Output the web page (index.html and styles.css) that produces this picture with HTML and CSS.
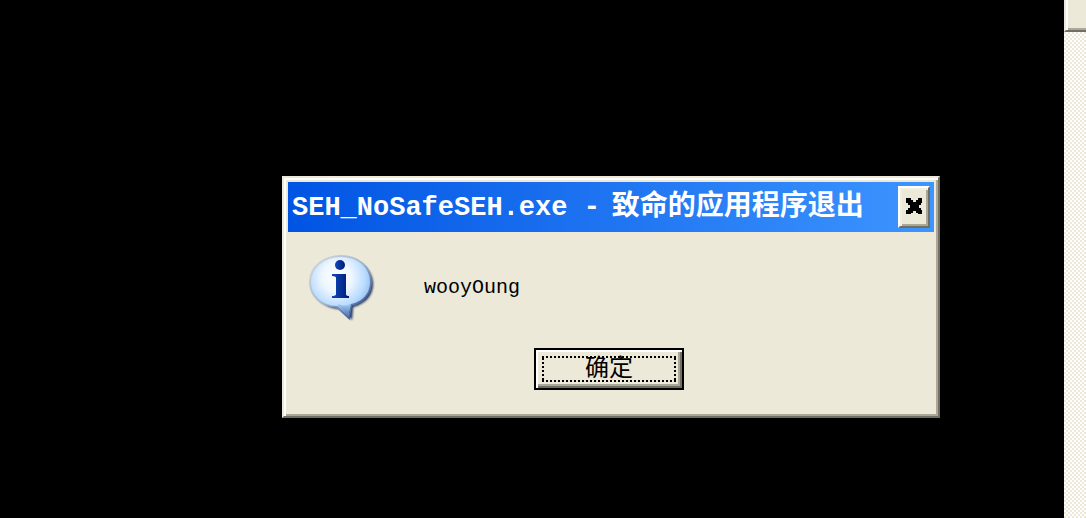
FILE: index.html
```html
<!DOCTYPE html>
<html lang="zh-CN">
<head>
<meta charset="utf-8">
<title>SEH_NoSafeSEH.exe</title>
<link rel="stylesheet" href="styles.css">
</head>
<body>
<main class="desktop">
  <div class="console"></div>
  <aside class="side">
    <div class="side-header"></div>
    <div class="side-track"></div>
  </aside>
  <section class="dialog" role="alertdialog" aria-labelledby="title" aria-describedby="message">
    <header class="titlebar">
      <h1 class="title" id="title"><span class="latin">SEH_NoSafeSEH.exe -</span><span>致命的应用程序退出</span></h1>
      <button class="close" type="button" aria-label="Close">
        <svg class="cross" width="16" height="16" viewBox="0 0 8 8" shape-rendering="crispEdges" aria-hidden="true"><path d="M0 0H2V1H3V2H5V1H6V0H8V2H7V3H6V5H7V6H8V8H6V7H5V6H3V7H2V8H0V6H1V5H2V3H1V2H0Z"/></svg>
      </button>
    </header>
    <div class="content">
      <svg class="info" width="68" height="68" viewBox="0 0 68 68" aria-hidden="true">
        <defs>
          <radialGradient id="bubble" cx="44%" cy="34%" r="62%">
            <stop offset="0" stop-color="#fff"/>
            <stop offset=".4" stop-color="#eef6ff"/>
            <stop offset=".75" stop-color="#b9dcff"/>
            <stop offset="1" stop-color="#8fb8e8"/>
          </radialGradient>
          <linearGradient id="rim" x1="0" y1="0" x2="1" y2="1">
            <stop offset="0" stop-color="#d6d9dc"/>
            <stop offset=".5" stop-color="#a3b6cf"/>
            <stop offset="1" stop-color="#12357a"/>
          </linearGradient>
          <linearGradient id="tail" x1="0" y1="0" x2="0" y2="1">
            <stop offset="0" stop-color="#a4cbf4"/>
            <stop offset="1" stop-color="#4a75b4"/>
          </linearGradient>
          <linearGradient id="letter" x1="0" y1="0" x2="1" y2="0">
            <stop offset="0" stop-color="#0d49b8"/>
            <stop offset="1" stop-color="#001a78"/>
          </linearGradient>
          <filter id="soft" x="-20%" y="-20%" width="140%" height="140%"><feGaussianBlur stdDeviation="1"/></filter>
        </defs>
        <path transform="translate(2 2)" filter="url(#soft)" fill="#12295c" d="M33 3C50 3 63 14 63 28C63 40 55 48 43 51L42 64L30 53C14 52 3 42 3 28C3 14 16 3 33 3Z"/>
        <path fill="url(#bubble)" stroke="url(#rim)" stroke-width="2" d="M33 2C50 2 63 13 63 28C63 40 55 49 43 51L41 64L29 53C13 52 2 42 2 28C2 13 16 2 33 2Z"/>
        <path fill="url(#tail)" d="M30 50Q36 53 43 50L40 62L30 52Z"/>
        <ellipse cx="32" cy="11" rx="5" ry="5" fill="url(#letter)"/>
        <path fill="url(#letter)" d="M24 20H38V40Q38 42 41 42V44H24V42Q28 42 28 40V24Q28 22 24 22Z"/>
      </svg>
      <p class="message" id="message">wooyOung</p>
    </div>
    <footer class="actions">
      <button class="ok" type="button"><span class="focus"><svg class="dots" width="100%" height="100%" shape-rendering="crispEdges" aria-hidden="true"><rect x="0" y="0" width="100%" height="100%"/></svg>确定</span></button>
    </footer>
  </section>
</main>
</body>
</html>
```
FILE: styles.css
```css
* { box-sizing: border-box; }
body {
  margin: 0;
  background: #000;
  color: #000;
  font-family: "Liberation Mono", "Noto Sans CJK SC", monospace;
}
.desktop {
  position: relative;
  display: flex;
  min-height: 100vh;
  overflow: hidden;
}
.console { flex: 1; background: #000; }
.side {
  display: flex;
  flex-direction: column;
  width: 22px;
}
.side-header {
  height: 32px;
  background: #ece9d8;
  border-left: 2px solid #ece9d8;
  border-bottom: 2px solid #716f64;
  box-shadow: inset 2px 0 #fff, inset 0 -2px #aca899;
}
.side-track {
  flex: 1;
  background: repeating-conic-gradient(#fff 0 25%, #ece9d8 0 50%) 0 0 / 4px 4px;
}
.dialog {
  position: absolute;
  left: 282px;
  top: 176px;
  width: 658px;
  padding: 4px;
  background: #ece9d8;
  border: 2px solid;
  border-color: #ece9d8 #716f64 #716f64 #ece9d8;
  box-shadow: inset 2px 2px #fff, inset -2px -2px #aca899;
}
.titlebar {
  display: flex;
  align-items: center;
  justify-content: space-between;
  height: 50px;
  padding: 0 4px;
  background: linear-gradient(90deg, #0054e3, #3d95ff);
}
.title {
  display: flex;
  align-items: baseline;
  gap: 12px;
  margin: 0;
  padding-top: 2px;
  color: #fff;
  font-size: 28px;
  font-weight: 700;
  line-height: 40px;
  white-space: nowrap;
}
.latin { font-size: 27px; }
.close {
  display: grid;
  place-items: center;
  width: 32px;
  height: 42px;
  padding: 0 0 2px;
  background: #ece9d8;
  border: 2px solid;
  border-color: #fff #716f64 #716f64 #fff;
  box-shadow: inset 2px 2px #f1efe2, inset -2px -2px #aca899;
  color: #000;
}
.cross path {
  stroke: #000;
  stroke-width: 1px;
  vector-effect: non-scaling-stroke;
}
.content {
  display: flex;
  align-items: center;
  gap: 48px;
  padding: 22px 20px 0;
}
.info { display: block; }
.message {
  margin: 0;
  font-size: 20px;
  line-height: 24px;
}
.actions {
  display: flex;
  justify-content: center;
  padding: 26px 4px 22px 0;
}
.ok {
  display: flex;
  width: 150px;
  height: 42px;
  padding: 6px;
  background: #ece9d8;
  border: 2px solid #000;
  box-shadow: inset 2px 2px #fff, inset -2px -2px #716f64, inset -4px -4px #aca899;
  color: #000;
  font-family: "Noto Sans CJK SC", sans-serif;
  font-size: 24px;
}
.focus {
  position: relative;
  flex: 1;
  height: 26px;
  line-height: 20px;
}
.dots {
  position: absolute;
  inset: 0;
}
.dots rect {
  fill: none;
  stroke: #000;
  stroke-width: 4px;
  stroke-dasharray: 2 2;
}
```
